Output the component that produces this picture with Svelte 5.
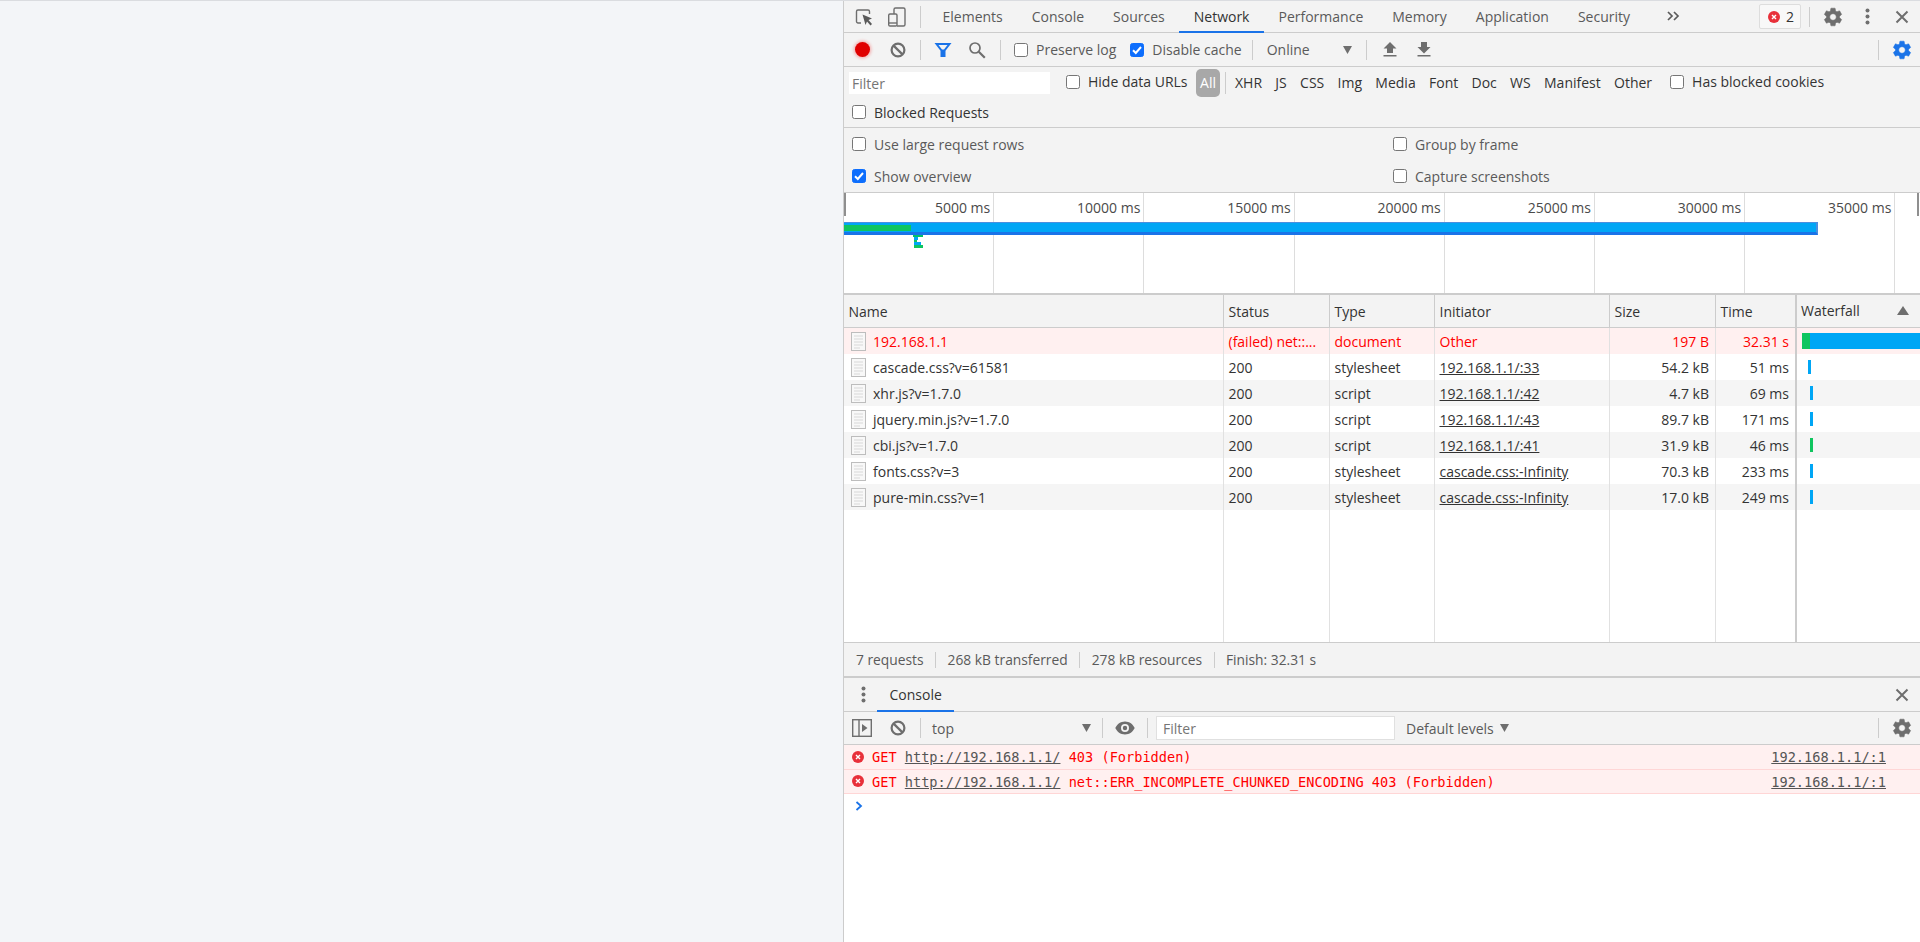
<script>
  const tabs = ['Elements', 'Console', 'Sources', 'Network', 'Performance', 'Memory', 'Application', 'Security'];
  const chips = ['XHR', 'JS', 'CSS', 'Img', 'Media', 'Font', 'Doc', 'WS', 'Manifest', 'Other'];
  const ticks = ['5000 ms', '10000 ms', '15000 ms', '20000 ms', '25000 ms', '30000 ms', '35000 ms'];
  const overviewMarks = [
    { x: 69, y: 0, w: 10, h: 2, c: '#00c26a' },
    { x: 70, y: 2, w: 4, h: 3, c: '#00a6f5' },
    { x: 70, y: 5, w: 3, h: 2, c: '#0fc55f' },
    { x: 70, y: 7, w: 7, h: 3, c: '#00a6f5' },
    { x: 70, y: 10, w: 9, h: 3, c: '#0fc55f' }
  ];
  const rows = [
    { name: '192.168.1.1', status: '(failed) net::...', type: 'document', init: 'Other', size: '197 B', time: '32.31 s', error: true },
    { name: 'cascade.css?v=61581', status: '200', type: 'stylesheet', init: '192.168.1.1/:33', link: true, size: '54.2 kB', time: '51 ms', bar: 6, color: '#00a6f5' },
    { name: 'xhr.js?v=1.7.0', status: '200', type: 'script', init: '192.168.1.1/:42', link: true, size: '4.7 kB', time: '69 ms', bar: 8, color: '#00a6f5' },
    { name: 'jquery.min.js?v=1.7.0', status: '200', type: 'script', init: '192.168.1.1/:43', link: true, size: '89.7 kB', time: '171 ms', bar: 8, color: '#00a6f5' },
    { name: 'cbi.js?v=1.7.0', status: '200', type: 'script', init: '192.168.1.1/:41', link: true, size: '31.9 kB', time: '46 ms', bar: 8, color: '#0fc55f' },
    { name: 'fonts.css?v=3', status: '200', type: 'stylesheet', init: 'cascade.css:-Infinity', link: true, size: '70.3 kB', time: '233 ms', bar: 8, color: '#00a6f5' },
    { name: 'pure-min.css?v=1', status: '200', type: 'stylesheet', init: 'cascade.css:-Infinity', link: true, size: '17.0 kB', time: '249 ms', bar: 8, color: '#00a6f5' }
  ];
  const messages = ['403 (Forbidden)', 'net::ERR_INCOMPLETE_CHUNKED_ENCODING 403 (Forbidden)'];
  const stats = ['7 requests', '268 kB transferred', '278 kB resources', 'Finish: 32.31 s'];
  const gearPath = 'M19.14 12.94c.04-.3.06-.61.06-.94 0-.32-.02-.64-.07-.94l2.03-1.58a.49.49 0 0 0 .12-.61l-1.92-3.32a.488.488 0 0 0-.59-.22l-2.39.96c-.5-.38-1.03-.7-1.62-.94l-.36-2.54a.484.484 0 0 0-.48-.41h-3.84c-.24 0-.43.17-.47.41l-.36 2.54c-.59.24-1.13.57-1.62.94l-2.39-.96c-.22-.08-.47 0-.59.22L2.74 8.87c-.12.21-.08.47.12.61l2.03 1.58c-.05.3-.09.63-.09.94s.02.64.07.94l-2.03 1.58a.49.49 0 0 0-.12.61l1.92 3.32c.12.22.37.29.59.22l2.39-.96c.5.38 1.03.7 1.62.94l.36 2.54c.05.24.24.41.48.41h3.84c.24 0 .44-.17.47-.41l.36-2.54c.59-.24 1.13-.56 1.62-.94l2.39.96c.22.08.47 0 .59-.22l1.92-3.32c.12-.22.07-.47-.12-.61l-2.01-1.58zM12 15.6c-1.98 0-3.6-1.62-3.6-3.6s1.62-3.6 3.6-3.6 3.6 1.62 3.6 3.6-1.62 3.6-3.6 3.6z';
</script>

{#snippet gear(color)}
  <svg width="22" height="22" viewBox="0 0 24 24"><path d={gearPath} fill={color} stroke={color} stroke-width="0.6" /></svg>
{/snippet}

{#snippet clear()}
  <svg width="16" height="16" viewBox="0 0 16 16" fill="none" stroke="#6e6e6e" stroke-width="2.2"><circle cx="8" cy="8" r="6.4" /><path d="M3.6 3.6l8.8 8.8" /></svg>
{/snippet}

{#snippet closeIcon()}
  <svg width="14" height="14" viewBox="0 0 14 14" fill="none" stroke="#6e6e6e" stroke-width="2"><path d="M1.5 1.5l11 11M12.5 1.5l-11 11" /></svg>
{/snippet}

{#snippet dots()}
  <svg width="5" height="17" viewBox="0 0 5 17" fill="#6e6e6e"><circle cx="2.5" cy="2.5" r="2" /><circle cx="2.5" cy="8.5" r="2" /><circle cx="2.5" cy="14.5" r="2" /></svg>
{/snippet}

{#snippet errorIcon(size)}
  <svg width={size} height={size} viewBox="0 0 12 12"><circle cx="6" cy="6" r="6" fill="#e8303a" /><path d="M4 4l4 4M8 4l-4 4" stroke="#fff" stroke-width="1.4" /></svg>
{/snippet}

{#snippet triangle()}
  <svg width="9" height="8" viewBox="0 0 9 8"><path d="M0 0h9L4.5 8z" fill="#6e6e6e" /></svg>
{/snippet}

{#snippet check(on, label, strong)}
  <span class="check" class:strong>
    <span class="box" class:on>
      {#if on}<svg width="14" height="14" viewBox="0 0 14 14" fill="none" stroke="#fff" stroke-width="2"><path d="M3 7.2l2.8 2.8L11 4" /></svg>{/if}
    </span>
    <span class="check-label">{label}</span>
  </span>
{/snippet}

<div class="page">
  <div class="viewport"></div>
  <div class="devtools">
    <div class="bar tabbar">
      <span class="tool t33 first">
        <svg width="18" height="18" viewBox="0 0 18 18" fill="none"><path d="M6 15H3a1.5 1.5 0 0 1-1.5-1.5v-10A1.5 1.5 0 0 1 3 2h10a1.500 1.500 0 0 1 1.500 1.500V6" stroke="#6e6e6e" stroke-width="1.4" /><path d="M7.500 6.500l9.500 4-3.500 1.500 3.500 4-1.500 1.500-3.500-4-1.500 3.500z" fill="#5a5a5a" /></svg>
      </span>
      <span class="tool t33">
        <svg width="20" height="20" viewBox="0 0 20 20" fill="none" stroke="#6e6e6e" stroke-width="1.4"><path d="M7 7V2.500A1.500 1.500 0 0 1 8.500 1h8A1.500 1.500 0 0 1 18 2.500v15a1.500 1.500 0 0 1-1.500 1.500H10" /><rect x="1.700" y="7" width="8.300" height="12" rx="1.300" /><path d="M1.700 16h8.300" /></svg>
      </span>
      <span class="sep s-tab"></span>
      <div class="tabs">
        {#each tabs as t}
          <span class="tab" class:active={t === 'Network'}>{t}</span>
        {/each}
      </div>
      <span class="more">
        <svg width="13" height="10" viewBox="0 0 13 10" fill="none" stroke="#5a5a5a" stroke-width="1.700"><path d="M1 1l4 4-4 4M7 1l4 4-4 4" /></svg>
      </span>
      <span class="spacer"></span>
      <span class="badge">{@render errorIcon(12)}<span>2</span></span>
      <span class="sep s-badge"></span>
      <span class="tool t35">{@render gear('#6e6e6e')}</span>
      <span class="tool t35">{@render dots()}</span>
      <span class="tool t34 last">{@render closeIcon()}</span>
    </div>

    <div class="bar toolbar">
      <span class="tool t36">
        <span class="record"></span>
      </span>
      <span class="tool t36">{@render clear()}</span>
      <span class="sep s-a"></span>
      <span class="tool t34 after-sep">
        <svg width="18" height="18" viewBox="0 0 18 18"><path fill-rule="evenodd" d="M0.500 2h17L11.500 9.800V16h-5V9.800zM4.500 4l3.500 4.600h2L13.500 4z" fill="#1a73e8" /></svg>
      </span>
      <span class="tool t34">
        <svg width="18" height="18" viewBox="0 0 18 18" fill="none" stroke="#6e6e6e"><circle cx="7" cy="7" r="5" stroke-width="1.700" /><path d="M10.800 10.800l6 6" stroke-width="2.200" /></svg>
      </span>
      <span class="sep s-b"></span>
      <span class="pos-preserve">{@render check(false, 'Preserve log')}</span>
      <span class="pos-disable">{@render check(true, 'Disable cache')}</span>
      <span class="sep s-c"></span>
      <span class="select"><span class="check-label">Online</span> {@render triangle()}</span>
      <span class="sep s-d"></span>
      <span class="tool t34 up">
        <svg width="14" height="15" viewBox="0 0 14 15" fill="#6e6e6e"><path d="M7 0l6.500 6.500H10V11H4V6.500H0.500zM0.500 13h13v1.500H0.500z" /></svg>
      </span>
      <span class="tool t34">
        <svg width="14" height="15" viewBox="0 0 14 15" fill="#6e6e6e"><path d="M4 0h6v5h3.500L7 11.500 0.500 5H4zM0.500 13h13v1.500H0.500z" /></svg>
      </span>
      <span class="spacer"></span>
      <span class="sep s-e"></span>
      <span class="tool t34 last">{@render gear('#1a73e8')}</span>
    </div>

    <div class="filters">
      <div class="filter-row">
        <span class="filter-input">Filter</span>
        <span class="pos-hide">{@render check(false, 'Hide data URLs', true)}</span>
        <span class="pill">All</span>
        <span class="sep s-pill"></span>
        <div class="chips">
          {#each chips as c}<span>{c}</span>{/each}
        </div>
        <span class="pos-cookies">{@render check(false, 'Has blocked cookies', true)}</span>
      </div>
      <div class="blocked">{@render check(false, 'Blocked Requests', true)}</div>
    </div>

    <div class="settings">
      {@render check(false, 'Use large request rows')}
      {@render check(false, 'Group by frame')}
      {@render check(true, 'Show overview')}
      {@render check(false, 'Capture screenshots')}
    </div>

    <div class="overview">
      {#each ticks as t}
        <div class="tick">{t}</div>
      {/each}
      <span class="grip grip-l"></span>
      <span class="grip grip-r"></span>
      <div class="ov-bar"><div class="ov-green"></div></div>
      {#each overviewMarks as m}
        <span class="ov-mark" style="left:{m.x}px;top:{42 + m.y}px;width:{m.w}px;height:{m.h}px;background:{m.c}"></span>
      {/each}
    </div>

    <div class="table">
      <div class="line head">
        <span>Name</span><span>Status</span><span>Type</span><span>Initiator</span><span>Size</span><span>Time</span>
        <span class="wf-head">Waterfall <svg width="12" height="9" viewBox="0 0 12 9"><path d="M6 0l6 9H0z" fill="#6e6e6e" /></svg></span>
      </div>
      {#each rows as r, i}
        <div class="line row" class:alt={i % 2 === 0 && i > 0} class:err={r.error}>
          <span class="name">
            <svg class="doc" width="15" height="19" viewBox="0 0 15 19"><rect x="0.500" y="0.500" width="14" height="18" fill="#f8f8f8" stroke="#bdbdbd" /><path d="M3 4h9M3 7h9M3 10h9M3 13h9M3 16h6" stroke="#d8d8d8" /></svg>
            {r.name}
          </span>
          <span>{r.status}</span>
          <span>{r.type}</span>
          <span class:link={r.link}>{r.init}</span>
          <span class="num">{r.size}</span>
          <span class="num">{r.time}</span>
          <span class="wf">
            {#if r.error}
              <span class="wf-green"></span><span class="wf-blue"></span>
            {:else}
              <span class="wf-tick" style="margin-left:{r.bar}px;background:{r.color}"></span>
            {/if}
          </span>
        </div>
      {/each}
      <div class="line filler"><span></span><span></span><span></span><span></span><span></span><span></span><span></span></div>
    </div>

    <div class="status">
      {#each stats as s, i}
        {#if i > 0}<span class="status-sep"></span>{/if}
        <span>{s}</span>
      {/each}
    </div>

    <div class="bar drawer">
      <span class="tool drawer-dots">{@render dots()}</span>
      <span class="drawer-tab">Console</span>
      <span class="spacer"></span>
      <span class="tool t34 last">{@render closeIcon()}</span>
    </div>

    <div class="bar toolbar console-bar">
      <span class="tool t36">
        <svg width="20" height="18" viewBox="0 0 20 18" fill="none" stroke="#6e6e6e" stroke-width="1.400"><rect x="0.700" y="0.700" width="18.600" height="16.600" /><path d="M7 1v16" /><path d="M10 5l5.500 4-5.500 4z" fill="#6e6e6e" stroke="none" /></svg>
      </span>
      <span class="tool t36">{@render clear()}</span>
      <span class="sep s-a"></span>
      <span class="select context"><span class="check-label">top</span> {@render triangle()}</span>
      <span class="sep s-ctx"></span>
      <span class="tool t34 eye">
        <svg width="20" height="14" viewBox="0 0 20 14"><path fill-rule="evenodd" d="M10 0.500c4.500 0 8 2.800 9.700 6.500-1.700 3.700-5.200 6.500-9.700 6.500S2 10.700 0.300 7C2 3.300 5.500 0.500 10 0.500zM10 3a4 4 0 1 0 0 8 4 4 0 0 0 0-8zM10 4.800a2.200 2.200 0 1 1 0 4.400 2.200 2.200 0 0 1 0-4.400z" fill="#6e6e6e" /></svg>
      </span>
      <span class="sep s-eye"></span>
      <span class="console-filter">Filter</span>
      <span class="levels"><span class="check-label">Default levels</span> {@render triangle()}</span>
      <span class="spacer"></span>
      <span class="sep s-e"></span>
      <span class="tool t34 last">{@render gear('#6e6e6e')}</span>
    </div>

    <div class="console">
      {#each messages as m}
        <div class="msg">
          {@render errorIcon(12)}
          <span class="msg-text">GET <u>http://192.168.1.1/</u> {m}</span>
          <u class="source">192.168.1.1/:1</u>
        </div>
      {/each}
      <div class="prompt">
        <svg width="8" height="10" viewBox="0 0 8 10" fill="none" stroke="#1a73e8" stroke-width="1.800"><path d="M1.500 1l4.500 4-4.500 4" /></svg>
      </div>
    </div>
  </div>
</div>

<style>
  :global(body) {
    margin: 0;
    background: #fff;
  }
  .page {
    display: flex;
    height: 942px;
    width: 1920px;
    overflow: hidden;
    box-sizing: border-box;
    border-top: 1px solid #dadce0;
    font: 14px/18px 'Open Sans', sans-serif;
    color: #333;
  }
  .viewport {
    width: 843px;
    flex: none;
    background: #f3f5f8;
  }
  .devtools {
    flex: 1;
    min-width: 0;
    display: flex;
    flex-direction: column;
    border-left: 1px solid #ccc;
    background: #fff;
  }
  .bar {
    display: flex;
    align-items: center;
    flex: none;
    box-sizing: border-box;
    background: #f3f3f3;
    border-bottom: 1px solid #ccc;
  }
  .spacer { flex: 1; }
  .tool {
    display: flex;
    align-items: center;
    justify-content: center;
    flex: none;
  }
  .t33 { width: 33px; }
  .t34 { width: 34px; }
  .t35 { width: 35px; }
  .t36 { width: 36px; }
  .first { margin-left: 3px; }
  .last { margin-right: 1px; }
  .after-sep { margin-left: 5px; }
  .up { margin-left: 6px; }
  .sep {
    flex: none;
    width: 1px;
    height: 20px;
    background: #ccc;
  }
  .s-tab { margin-left: 7px; height: 22px; }
  .s-a { margin-left: 4px; }
  .s-b { margin-left: 6px; }
  .s-c { margin-left: 10px; }
  .s-d { margin-left: 14px; }
  .s-badge { margin-left: 8px; }
  .s-badge + .tool { margin-left: 5px; }
  .s-pill { margin-left: 5px; height: 22px; }
  .s-ctx { margin-left: 11px; }
  .s-eye { margin-left: 5px; }

  .tabbar { height: 32px; }
  .tabs {
    display: flex;
    align-self: stretch;
    margin-left: 7px;
    color: #5a5a5a;
  }
  .tab {
    display: flex;
    align-items: center;
    padding: 1px 14.500px 0;
    margin-bottom: -1px;
    border-bottom: 2px solid transparent;
    box-sizing: border-box;
  }
  .tab.active {
    color: #333;
    border-bottom-color: #1a73e8;
  }
  .more { margin-left: 22px; display: flex; margin-top: -2px; }
  .badge {
    display: flex;
    align-items: center;
    gap: 6px;
    width: 42px;
    height: 25px;
    box-sizing: border-box;
    padding-left: 8px;
    background: #f8f8f8;
    border: 1px solid #ddd;
    border-radius: 2px;
  }

  .toolbar { height: 34px; }
  .record {
    width: 15px;
    height: 15px;
    border-radius: 50%;
    background: #e00000;
    box-shadow: 0 0 3px 1.500px #f3b3b3;
  }
  .check {
    display: inline-flex;
    align-items: center;
    gap: 8px;
    color: #5a5a5a;
    white-space: nowrap;
  }
  .check.strong { color: #333; }
  .check-label { padding-top: 1px; }
  .box {
    width: 14px;
    height: 14px;
    box-sizing: border-box;
    flex: none;
    display: flex;
    align-items: center;
    justify-content: center;
    background: #fff;
    border: 1px solid #767676;
    border-radius: 2.500px;
  }
  .box svg { margin: -1px; flex: none; }
  .box.on {
    background: #0d6efd;
    border-color: #0d6efd;
  }
  .pos-preserve { margin-left: 13px; display: flex; }
  .pos-disable { margin-left: 14px; display: flex; }
  .select {
    display: flex;
    align-items: center;
    justify-content: space-between;
    width: 85px;
    margin-left: 14px;
    color: #5a5a5a;
  }
  .s-e { margin-right: 6px; }

  .filters {
    flex: none;
    box-sizing: border-box;
    height: 61px;
    background: #f3f3f3;
    border-bottom: 1px solid #ccc;
  }
  .filter-row {
    display: flex;
    align-items: center;
    height: 31px;
    padding: 1px 0;
    box-sizing: border-box;
  }
  .filter-input {
    width: 201px;
    height: 22px;
    margin-left: 5px;
    padding-left: 3px;
    box-sizing: border-box;
    background: #fff;
    color: #757575;
    line-height: 23px;
    flex: none;
  }
  .pos-hide {
    width: 130px;
    flex: none;
    margin-left: 16px;
    display: flex;
    margin-top: -2px;
  }
  .pill {
    width: 24px;
    height: 28px;
    flex: none;
    text-align: center;
    line-height: 28px;
    background: #a8a8a8;
    color: #fff;
    border-radius: 5px;
  }
  .chips {
    display: flex;
    gap: 13.300px;
    margin-left: 9px;
  }
  .pos-cookies { margin-left: 18px; display: flex; margin-top: -2px; }
  .blocked {
    display: flex;
    align-items: center;
    height: 28px;
    padding-left: 8px;
  }

  .settings {
    flex: none;
    box-sizing: border-box;
    height: 65px;
    display: grid;
    grid-template-columns: 541px 1fr;
    grid-auto-rows: 32px;
    align-items: center;
    padding-left: 8px;
    background: #f3f3f3;
    border-bottom: 1px solid #ccc;
  }

  .overview {
    flex: none;
    position: relative;
    display: flex;
    box-sizing: border-box;
    height: 102px;
    background: #fff;
    border-bottom: 2px solid #ccc;
  }
  .tick {
    flex: none;
    box-sizing: border-box;
    width: 150.200px;
    padding: 6px 3px 0 0;
    text-align: right;
    color: #4a4a4a;
    border-right: 1px solid #ddd;
  }
  .grip {
    position: absolute;
    top: 0;
    width: 2px;
    height: 23px;
    background: #8f8f8f;
  }
  .grip-l { left: 0; }
  .grip-r { right: 1px; }
  .ov-bar {
    position: absolute;
    left: 0;
    top: 29px;
    width: 974px;
    height: 13px;
    box-sizing: border-box;
    background: #00a6f5;
    border: 1px solid #4a8fe0;
    border-bottom: 3px solid #1a73e8;
    border-right-width: 2px;
    border-left: none;
  }
  .ov-green {
    width: 67px;
    height: 6px;
    margin-top: 2px;
    background: #0fc55f;
  }
  .ov-mark {
    position: absolute;
  }

  .table {
    flex: 1;
    min-height: 0;
    display: flex;
    flex-direction: column;
  }
  .line {
    display: grid;
    grid-template-columns: 380px 106px 105px 175px 106px 81px 1fr;
    flex: none;
  }
  .line > span {
    box-sizing: border-box;
    padding: 1px 4.500px 0;
    border-right: 1px solid #e1e1e1;
    white-space: nowrap;
    overflow: hidden;
    display: flex;
    align-items: center;
  }
  .line > span:nth-child(6) {
    border-right: 2px solid #ccc;
  }
  .line > span:last-child {
    border-right: none;
  }
  .head {
    height: 33px;
    background: #f3f3f3;
    border-bottom: 1px solid #ccc;
    box-sizing: border-box;
  }
  .head > span {
    border-right-color: #ccc;
  }
  .head > .wf-head {
    justify-content: space-between;
    padding: 0 11px 1px 4px;
  }
  .row { height: 26px; }
  .row.alt { background: #f5f5f5; }
  .row.err { background: #fff0f0; color: #f00; }
  .name { gap: 7px; padding-left: 7px !important; }
  .doc { flex: none; }
  .num { justify-content: flex-end; padding-right: 6px !important; }
  .link { text-decoration: underline; }
  .filler { flex: 1; }
  .wf { padding: 0 0 0 5px !important; }
  .wf-green { width: 8px; height: 16px; background: #0fc55f; flex: none; }
  .wf-blue { flex: 1; height: 16px; background: #00a6f5; }
  .wf-tick { width: 3px; height: 14px; flex: none; }

  .status {
    flex: none;
    display: flex;
    align-items: center;
    gap: 11.500px;
    box-sizing: border-box;
    height: 36px;
    padding-left: 12px;
    background: #f3f3f3;
    color: #5a5a5a;
    font-size: 13.800px;
    border-top: 1px solid #ccc;
    border-bottom: 2px solid #ccc;
  }
  .status-sep {
    width: 1px;
    height: 16px;
    background: #ccc;
  }

  .drawer { height: 34px; }
  .drawer-dots { width: 32px; margin-left: 3px; }
  .drawer-tab {
    display: flex;
    align-items: center;
    align-self: stretch;
    box-sizing: border-box;
    margin-left: -2px;
    padding: 1px 12.500px 0;
    margin-bottom: -1px;
    border-bottom: 2px solid #1a73e8;
  }

  .console-bar { height: 33px; }
  .context { width: 159px; margin-left: 11px; }
  .eye { margin-left: 5px; }
  .console-filter {
    width: 239px;
    height: 24px;
    margin-left: 8px;
    padding-left: 6px;
    box-sizing: border-box;
    line-height: 23px;
    background: #fff;
    border: 1px solid #e0e0e0;
    color: #757575;
    flex: none;
  }
  .levels {
    display: flex;
    align-items: center;
    gap: 6px;
    margin-left: 11px;
    color: #5a5a5a;
  }

  .console {
    flex: none;
    height: 197px;
    background: #fff;
  }
  .msg {
    display: flex;
    align-items: center;
    box-sizing: border-box;
    height: 24.500px;
    padding: 0 34px 0 8px;
    background: #fff0f0;
    border-bottom: 1px solid #ffd6d6;
    font: 13.620px/18px 'DejaVu Sans Mono', 'Liberation Mono', monospace;
    color: #f00;
  }
  .msg u { color: #555; }
  .msg-text { margin-left: 8px; padding-top: 1px; white-space: pre; }
  .source { margin-left: auto; padding-top: 1px; }
  .prompt {
    display: flex;
    padding: 7px 0 0 11px;
  }
</style>
